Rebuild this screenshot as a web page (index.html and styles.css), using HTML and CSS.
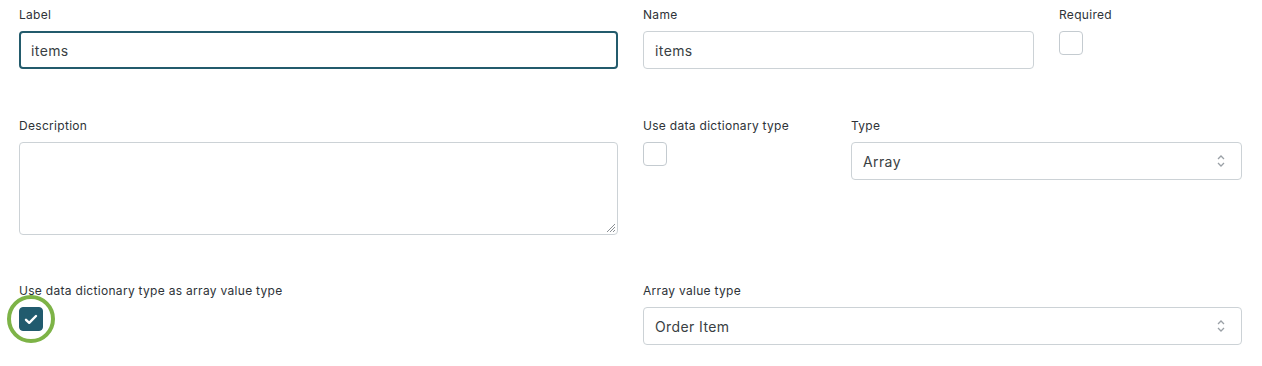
FILE: index.html
```html
<!DOCTYPE html>
<html lang="en">
<head>
  <meta charset="UTF-8">
  <title>Field settings</title>
  <link rel="stylesheet" href="styles.css">
</head>
<body>
  <form class="field-form">
    <!-- Row 1 -->
    <div class="row">
      <div class="field">
        <label class="field-label">Label</label>
        <div class="input focused">items</div>
      </div>
      <div class="split">
        <div class="field name-col">
          <label class="field-label">Name</label>
          <div class="input">items</div>
        </div>
        <div class="field">
          <label class="field-label">Required</label>
          <span class="checkbox"></span>
        </div>
      </div>
    </div>

    <!-- Row 2 -->
    <div class="row">
      <div class="field">
        <label class="field-label">Description</label>
        <div class="textarea">
          <svg class="grip" width="10" height="10" viewBox="0 0 10 10">
            <path d="M9 1L1 9M9 4L4 9M9 7L7 9" stroke="#8a8f94" stroke-width="1"/>
          </svg>
        </div>
      </div>
      <div class="split">
        <div class="field dict-col">
          <label class="field-label">Use data dictionary type</label>
          <span class="checkbox"></span>
        </div>
        <div class="field type-col">
          <label class="field-label">Type</label>
          <div class="input select">
            <span>Array</span>
            <svg class="caret" width="8" height="14" viewBox="0 0 8 14">
              <path d="M1 5L4 2L7 5M1 9L4 12L7 9" fill="none" stroke="#9aa0a6" stroke-width="1.3"/>
            </svg>
          </div>
        </div>
      </div>
    </div>

    <!-- Row 3 -->
    <div class="row">
      <div class="field">
        <label class="field-label">Use data dictionary type as array value type</label>
        <span class="checkbox checked">
          <svg width="14" height="11" viewBox="0 0 14 11">
            <path d="M2 5.8L5.2 8.8L12 2" fill="none" stroke="#fff" stroke-width="2.4" stroke-linecap="round" stroke-linejoin="round"/>
          </svg>
        </span>
      </div>
      <div class="field">
        <label class="field-label">Array value type</label>
        <div class="input select">
          <span>Order Item</span>
          <svg class="caret" width="8" height="14" viewBox="0 0 8 14">
            <path d="M1 5L4 2L7 5M1 9L4 12L7 9" fill="none" stroke="#9aa0a6" stroke-width="1.3"/>
          </svg>
        </div>
      </div>
    </div>
  </form>
</body>
</html>
```

FILE: styles.css
```css
/* General styles */
body {
  margin: 0;
  background: #fff;
  font-family: 'Inter', 'Open Sans', sans-serif;
  color: #2b3034;
}

.field-form {
  padding: 7px 20px 0 19px;
}

.row {
  display: grid;
  grid-template-columns: 1fr 1fr;
  column-gap: 25px;
  height: 111px;
}

.row:nth-child(2) {
  height: 165px;
}

.row:last-child {
  height: auto;
}

.field {
  display: flex;
  flex-direction: column;
  align-items: flex-start;
}

.field-label {
  font-size: 12px;
  line-height: 16px;
  color: #2e3338;
  margin-bottom: 8px;
  letter-spacing: 0.3px;
}

.split {
  display: flex;
  gap: 25px;
}

.name-col {
  width: 391px;
}

.dict-col {
  width: 183px;
}

.type-col {
  flex: 1;
}

.input {
  box-sizing: border-box;
  width: 100%;
  height: 38px;
  border: 1px solid #ccd2d6;
  border-radius: 4px;
  padding: 0 11px;
  display: flex;
  align-items: center;
  font-size: 14px;
  color: #3a3f44;
  letter-spacing: 0.4px;
}

.input.focused {
  border: 2px solid #235b6c;
  padding: 0 10px;
}

.select {
  justify-content: space-between;
  padding-right: 16px;
}

.caret {
  display: block;
}

.textarea {
  box-sizing: border-box;
  width: 100%;
  height: 93px;
  border: 1px solid #ccd2d6;
  border-radius: 4px;
  position: relative;
}

.grip {
  position: absolute;
  right: 1px;
  bottom: 1px;
}

.checkbox {
  box-sizing: border-box;
  width: 24px;
  height: 24px;
  border: 1px solid #c4cbd0;
  border-radius: 4px;
  display: flex;
  align-items: center;
  justify-content: center;
  position: relative;
}

.checkbox.checked {
  background: #215b6e;
  border-color: #215b6e;
}

/* focus ring round the checked box */
.checkbox.checked::after {
  content: "";
  position: absolute;
  left: -13px;
  top: -13px;
  width: 40px;
  height: 40px;
  border: 4px solid #7db347;
  border-radius: 50%;
}
```
